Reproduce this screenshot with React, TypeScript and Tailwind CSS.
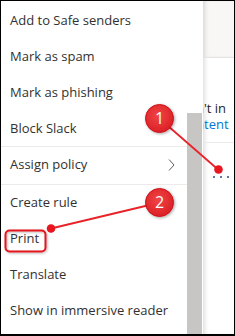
import React from "react";

const items1 = ["Add to Safe senders", "Mark as spam", "Mark as phishing", "Block Slack"];
const items3 = ["Create rule", "Print", "Translate", "Show in immersive reader"];

function Row({ label, chevron }: { label: string; chevron?: boolean }) {
  return (
    <div className="h-[36px] flex items-center justify-between pl-[9px] pr-[12px] text-[13px] text-[#323130] whitespace-nowrap">
      <span>{label}</span>
      {chevron && (
        <svg width="7" height="12" viewBox="0 0 7 12">
          <path d="M1 0.5 L6 6 L1 11.5" fill="none" stroke="#605e5c" strokeWidth="1" />
        </svg>
      )}
    </div>
  );
}

export default function App() {
  return (
    <div
      className="relative w-[235px] h-[336px] border-black border-t border-l border-r border-b-2 bg-white overflow-hidden flex"
      style={{ fontFamily: '"Open Sans", "Noto Sans", sans-serif' }}
    >
      {/* Menu */}
      <div className="w-[186px] flex flex-col pt-[2px] border-t border-[#e6e4e2] -mt-px">
        {items1.map((l) => (
          <Row key={l} label={l} />
        ))}
        <div className="h-px bg-[#edebe9] -mt-px" />
        <Row label="Assign policy" chevron />
        <div className="h-px bg-[#edebe9] mt-[1px]" />
        {items3.map((l) => (
          <Row key={l} label={l} />
        ))}
      </div>
      {/* Scrollbar */}
      <div className="w-[15px] flex flex-col">
        <div className="h-[112px]" />
        <div className="flex-1 bg-[#c8c6c4]" />
      </div>
      <div className="w-px bg-white" />
      {/* Right pane */}
      <div className="w-[31px] flex flex-col overflow-hidden shadow-[inset_4px_0_4px_-2px_rgba(0,0,0,0.13)]">
        <div className="h-[57px] shrink-0 bg-[#f8f7f6] border-b border-[#e6e4e2] shadow-[inset_4px_0_4px_-2px_rgba(0,0,0,0.13)]" />
        <div className="pt-[42px] text-[13px] leading-[16px] whitespace-nowrap">
          <div className="-ml-[7px] text-[#201f1e]">n't in</div>
          <div className="-ml-[21px] text-[#0078d4]">content</div>
        </div>
        <div className="mt-[10px] h-px shrink-0 bg-[#edebe9]" />
        <div className="flex gap-[5px] pl-[10px] pt-[33px]">
          <span className="w-[2px] h-[2px] rounded-full bg-[#2b4f7e]" />
          <span className="w-[2px] h-[2px] rounded-full bg-[#2b4f7e]" />
          <span className="w-[2px] h-[2px] rounded-full bg-[#2b4f7e]" />
        </div>
      </div>

      {/* Annotations */}
      <svg className="absolute inset-0 pointer-events-none" width="235" height="336" viewBox="-1 -1 235 336">
        <defs>
          <radialGradient id="rg" cx="45%" cy="40%" r="60%">
            <stop offset="0%" stopColor="#f04545" />
            <stop offset="100%" stopColor="#dc2026" />
          </radialGradient>
          <filter id="sh" x="-50%" y="-50%" width="200%" height="200%">
            <feDropShadow dx="1" dy="1" stdDeviation="1.5" floodColor="#000" floodOpacity="0.35" />
          </filter>
          <filter id="sh2" x="-20%" y="-40%" width="140%" height="180%">
            <feDropShadow dx="1" dy="1" stdDeviation="1.2" floodColor="#000" floodOpacity="0.3" />
          </filter>
        </defs>
        <line x1="158" y1="117" x2="216" y2="167.5" stroke="#e8232a" strokeWidth="1.8" />
        <line x1="158" y1="200.5" x2="49" y2="226.5" stroke="#e8232a" strokeWidth="1.8" />
        <circle cx="216.5" cy="167.5" r="4.3" fill="#e8161e" />
        <circle cx="49" cy="226.5" r="4.3" fill="#e8161e" />
        <rect x="3.5" y="228.5" width="40" height="21" rx="4" fill="none" stroke="#e4161e" strokeWidth="2" filter="url(#sh2)" />
        <g filter="url(#sh)">
          <circle cx="157.5" cy="116.5" r="14" fill="url(#rg)" stroke="#c9141b" strokeWidth="1" />
          <circle cx="157.5" cy="200.5" r="14" fill="url(#rg)" stroke="#c9141b" strokeWidth="1" />
        </g>
        <text x="157.5" y="122" textAnchor="middle" fontSize="16" fill="#fff" fontFamily="Open Sans, sans-serif">1</text>
        <text x="157.5" y="206" textAnchor="middle" fontSize="16" fill="#fff" fontFamily="Open Sans, sans-serif">2</text>
      </svg>
    </div>
  );
}
